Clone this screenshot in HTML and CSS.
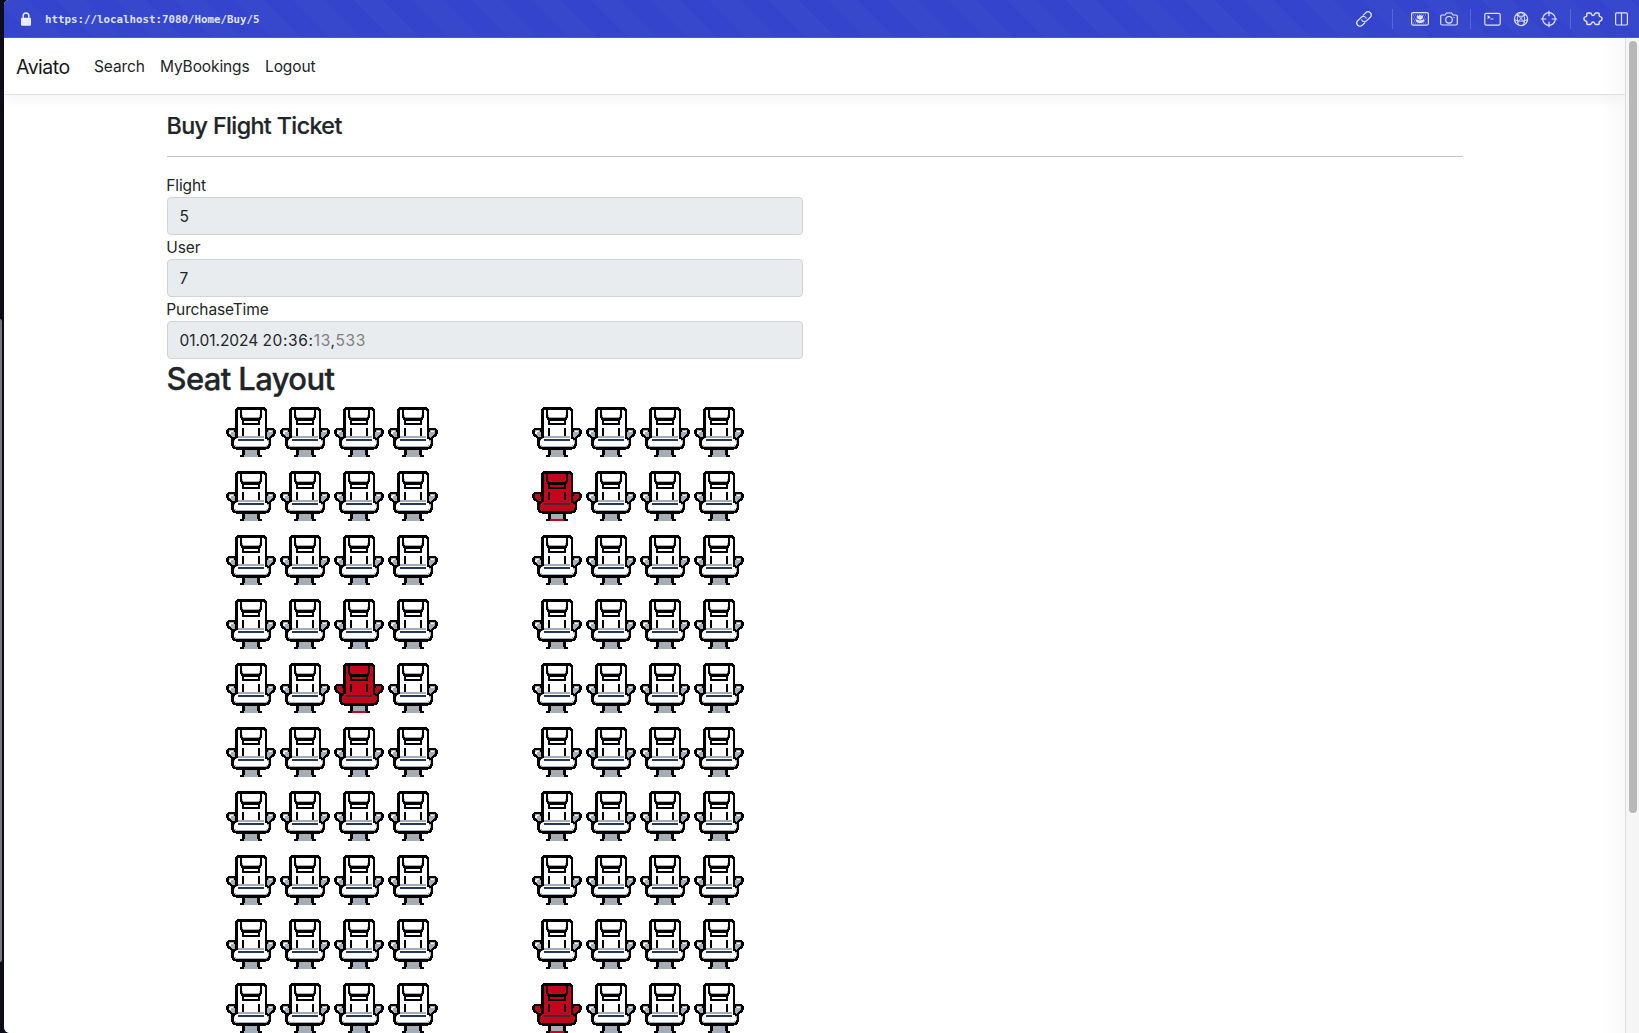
FILE: index.html
```html
<!DOCTYPE html>
<html lang="en">
<head>
<meta charset="utf-8">
<title>Buy Flight Ticket - Aviato</title>
<link rel="stylesheet" href="styles.css">
</head>
<body>
<svg class="defs" aria-hidden="true">
  <symbol id="seat" viewBox="0 0 50 50" shape-rendering="crispEdges">
    <path class="post" d="M17 42h16v7H17z"/>
    <path class="base" d="M18 48h14v2H18z"/>
    <path class="ink" d="M16 42h3v6h-1v2h-4v-2h2zM31 42h3v6h2v2h-4v-2h-1z"/>
    <path class="fill line" d="M10.300 34V4.300q0-3 3-3h23.400q3 0 3 3V34z"/>
    <path class="metal" d="M16 8h1v2h16V8h1v4H16z"/>
    <path class="ink" d="M14 2h2v8h1v1h16v-1h1V2h2v9h-1v2H15v-2h-1z"/>
    <path class="ink" d="M16 12h18v6H16z"/>
    <path class="fill" d="M18 14h14v2H18z"/>
    <path class="ink" d="M16 21h2v9h-2zM32 21h2v9h-2z"/>
    <path class="metal line" d="M10.300 25L8 22H4.500Q1.300 22 1.300 25t3 4.500l2 1.500v5l4-4zM39.700 25l2.300-3h3.500q3.200 0 3.200 3t-3 4.500l-2 1.500v5l-4-4z"/>
    <path class="fill" d="M4 24h3v1H5v2H3v-2h1zM43 24h3v1h-3z"/>
    <path class="metal line" d="M10.300 31L6.300 32.500v4q0 5 5 5h27.400q5 0 5-5v-4L39.700 31"/>
    <path class="metal" d="M12 29h26v3H12z"/>
    <path class="fill" d="M11 31h28v1h2v2h1v4h-2v1H10v-1H8v-4h1v-2h2z"/>
    <path class="seam" d="M12 32h26v2H12z"/>
  </symbol>
</svg>
<div class="window">
  <header class="chrome">
    <svg class="lock" viewBox="0 0 10 14"><path d="M2.200 6V3.800a2.800 2.800 0 0 1 5.600 0V6" fill="none" stroke="#e9ebff" stroke-width="1.500"/><rect y="5.800" width="10" height="8" rx="1.200" fill="#e9ebff"/></svg>
    <span class="url">https://localhost:7080/Home/Buy/5</span>
    <div class="tools">
      <svg width="16" height="16" viewBox="0 0 16 16"><g transform="rotate(-45 8 8)"><path d="M6.500 11.200H2.300a3.200 3.200 0 0 1 0-6.400h4.900a3.200 3.200 0 0 1 2.800 4.700M9.500 4.800h4.200a3.200 3.200 0 0 1 0 6.400H8.800A3.200 3.200 0 0 1 6 6.500"/></g></svg>
      <i class="sep sep-a"></i>
      <svg width="18" height="16" viewBox="0 0 18 16"><rect x=".6" y="1.600" width="16.800" height="12.500" rx="1.500"/><path class="hatch" d="M2 4h14M3 6h12M2 8h14M3 10h12M2 12h14"/><path class="solid" d="M6 4l1.500 1L9 3.500 10.500 5 12 4v2.200c0 1.500-1.500 2-2.500 2.200V10c1-1 2-1.500 4-1.500 0 2.500-2 3.500-4.500 3.500s-4.500-1-4.500-3.500c2 0 3 .5 4 1.500V8.400C7.500 8.200 6 7.700 6 6.200z"/></svg>
      <svg class="camera" width="18" height="16" viewBox="0 0 18 16"><path d="M2 4h3l1.500-2h5L13 4h3q1.300 0 1.300 1.300v7.200q0 1.500-1.500 1.500H2.200Q.7 14 .7 12.500V5.300Q.7 4 2 4z"/><circle cx="9" cy="8.800" r="3.300"/><path d="M13.500 6.500h1"/></svg>
      <i class="sep sep-b"></i>
      <svg width="17" height="16" viewBox="0 0 17 16"><rect x=".8" y="2.300" width="15.400" height="11.800" rx="1.500"/><path d="M3.500 4.800l2 1.400-2 1.400M6.500 8h3"/></svg>
      <svg class="globe" width="16" height="16" viewBox="0 0 16 16"><circle cx="8" cy="8" r="6.600"/><path class="fine" d="M8 1.400C3.500 4 3.500 10 6 14.300M8 1.400C12.500 4 12.500 10 10 14.300M3 3.800c3 2 7 2 10 0M1.500 8.500c4 2.200 9 2.200 13 0M3.500 12.500L12 3M12.500 12.500L4 3"/></svg>
      <svg class="target" width="18" height="18" viewBox="0 0 18 18"><circle cx="9" cy="9" r="6.300"/><path d="M9 .8v5.500M9 11.700v5.500M.8 9h5.500M11.700 9h5.500"/></svg>
      <i class="sep sep-c"></i>
      <svg width="20" height="16" viewBox="0 0 20 16"><path class="bold" d="M5 2h2.300c1.200 0 .8 2.500 2.700 2.500S11.500 2 12.700 2H15q1.200 0 1.200 1.200v1.500c0 1.400 2.900.4 2.900 3.100s-2.900 1.700-2.900 3.100v1.500q0 1.200-1.200 1.200h-2.300c-1.200 0-.8-2.500-2.700-2.500s-1.500 2.500-2.700 2.500H5q-1.200 0-1.200-1.200v-1.500C3.800 9.500.9 10.500.9 7.800s2.900-1.700 2.900-3.100V3.200Q3.800 2 5 2z"/></svg>
      <svg class="panes" width="13" height="14" viewBox="0 0 13 14"><rect x=".6" y=".8" width="11.800" height="12.200" rx="1.200"/><path d="M6.500 1v12"/></svg>
    </div>
  </header>
  <div class="viewport">
    <div class="page">
      <nav class="navbar"><a class="brand">Aviato</a><a class="search">Search</a><a class="bookings">MyBookings</a><a class="logout">Logout</a></nav>
      <main class="container">
        <h4>Buy Flight Ticket</h4>
        <hr>
        <form class="form">
          <label>Flight</label><div class="control">5</div>
          <label>User</label><div class="control">7</div>
          <label>PurchaseTime</label><div class="control"><span class="date">01.01.2024 </span><span class="time">20:36:<span class="muted">13</span>,<span class="muted">533</span></span></div>
        </form>
        <h2>Seat Layout</h2>
        <div class="seats" id="seats"></div>
      </main>
    </div>
    <div class="scrollbar"><div class="thumb"></div></div>
  </div>
</div>
<div class="side-thumb"></div>
<script src="seats.js"></script>
</body>
</html>
```
FILE: seats.js
```js
const taken = new Set(['1-4', '4-2', '9-4']);
const seats = document.getElementById('seats');
for (let row = 0; row < 10; row++) {
  for (let col = 0; col < 8; col++) {
    const classes = ['seat'];
    if (taken.has(`${row}-${col}`)) classes.push('taken');
    if (col === 4) classes.push('after-aisle');
    seats.insertAdjacentHTML('beforeend', `<svg class="${classes.join(' ')}"><use href="#seat"/></svg>`);
  }
}
```
FILE: styles.css
```css
* { box-sizing: border-box; }
body { margin: 0; height: 1033px; overflow: hidden; background: #0d0c1b; color: #212529; font: 15.5px/24px Inter, sans-serif; letter-spacing: -.12px; }
.defs { position: absolute; width: 0; height: 0; }
.window { margin-left: 4px; height: 1033px; display: flex; flex-direction: column; overflow: hidden; border-radius: 5px 0 0 6px; background: #fff; }
.chrome { height: 38px; flex: none; display: flex; align-items: center; padding: 0 11px 0 17px; border-bottom: 1px solid #4a57cf; background: repeating-linear-gradient(45deg, #3444cd 0 21px, #3848cc 21px 42px); }
.lock { width: 10px; height: 14px; }
.url { margin-left: 14px; padding-top: 2px; color: #dfe2ff; font: bold 10.8px/16px "DejaVu Sans Mono", monospace; letter-spacing: 0; white-space: nowrap; }
.tools { margin-left: auto; display: flex; align-items: center; }
.tools svg { fill: none; stroke: #e0e3ff; stroke-width: 1.2; overflow: visible; }
.tools .solid { fill: #e0e3ff; stroke: none; }
.tools .hatch { stroke-dasharray: 1 1; stroke-width: .8; opacity: .7; }
.tools .fine { stroke-width: .9; }
.tools .bold { stroke-width: 1.5; }
.sep { width: 1px; height: 20px; background: #5867df; }
.sep-a { margin: 0 18px 0 20px; }
.camera { margin-left: 11px; }
.sep-b { margin: 0 13px 0 12.500px; }
.globe { margin-left: 12px; }
.target { margin-left: 10.500px; }
.sep-c { margin: 0 12px 0 12.500px; }
.panes { margin-left: 12px; }
.viewport { flex: 1; display: flex; min-height: 0; }
.page { flex: 1; min-width: 0; overflow: hidden; background: linear-gradient(to left, #f9f9f9, #fff 24px); }
.scrollbar { width: 14px; padding: 3px 2px 0 3px; border-left: 1px solid #dcdce0; background: #f5f5f6; }
.thumb { width: 8px; height: 772px; border-radius: 4px; background: #b8b8b8; }
.side-thumb { position: absolute; left: 0; top: 319px; width: 2px; height: 643px; background: #77767c; border-radius: 0 2px 2px 0; }
.navbar { height: 57px; display: flex; align-items: center; padding: 2px 0 0 12px; border-bottom: 1px solid #dee2e6; box-shadow: 0 4px 12px rgba(0,0,0,.05); }
.brand { width: 78px; font-size: 19.5px; line-height: 24px; margin-top: -1px; letter-spacing: -.5px; color: #16181a; }
.search { width: 66px; letter-spacing: -.12px; }
.bookings { width: 105px; }
.container { margin-left: 163px; width: 1296px; }
h4 { margin: 16px 0 0; text-indent: -.5px; font-size: 23.3px; line-height: 29px; font-weight: 500; letter-spacing: -.61px; -webkit-text-stroke: .2px; }
hr { margin: 16px 0; border: 0; border-top: 1px solid #c4c5c6; }
.form { width: 636px; }
label { display: block; height: 24px; padding-top: 1px; text-indent: -.7px; }
.control { height: 38px; padding: 7px 11.500px 5px; border: 1px solid #ced4da; border-radius: 4px; background: #e9ecef; white-space: pre; }
.date { letter-spacing: -.05px; }
.time { letter-spacing: .65px; }
.muted { color: #808080; }
h2 { margin: 1px 0 0; text-indent: -.5px; font-size: 31px; line-height: 38px; font-weight: 500; letter-spacing: -.63px; -webkit-text-stroke: .3px; }
.seats { display: grid; grid-template-columns: repeat(4, 54px) 144px repeat(3, 54px); grid-auto-rows: 64px; width: max-content; margin-left: 59px; padding-top: 9px; }
.seat { width: 50px; height: 50px; }
.after-aisle { margin-left: 90px; }
.fill { fill: var(--seat-fill, #fff); }
.metal { fill: var(--seat-shade, #a3adb8); }
.post { fill: #a3adb8; }
.base { fill: var(--seat-fill, #a3adb8); }
.ink { fill: #000; }
.line { stroke: #000; stroke-width: 2.4px; }
.seam { fill: var(--seat-seam, #26384c); }
.taken { --seat-fill: #c4061c; --seat-shade: #b80a1d; --seat-seam: #49262c; }
```
